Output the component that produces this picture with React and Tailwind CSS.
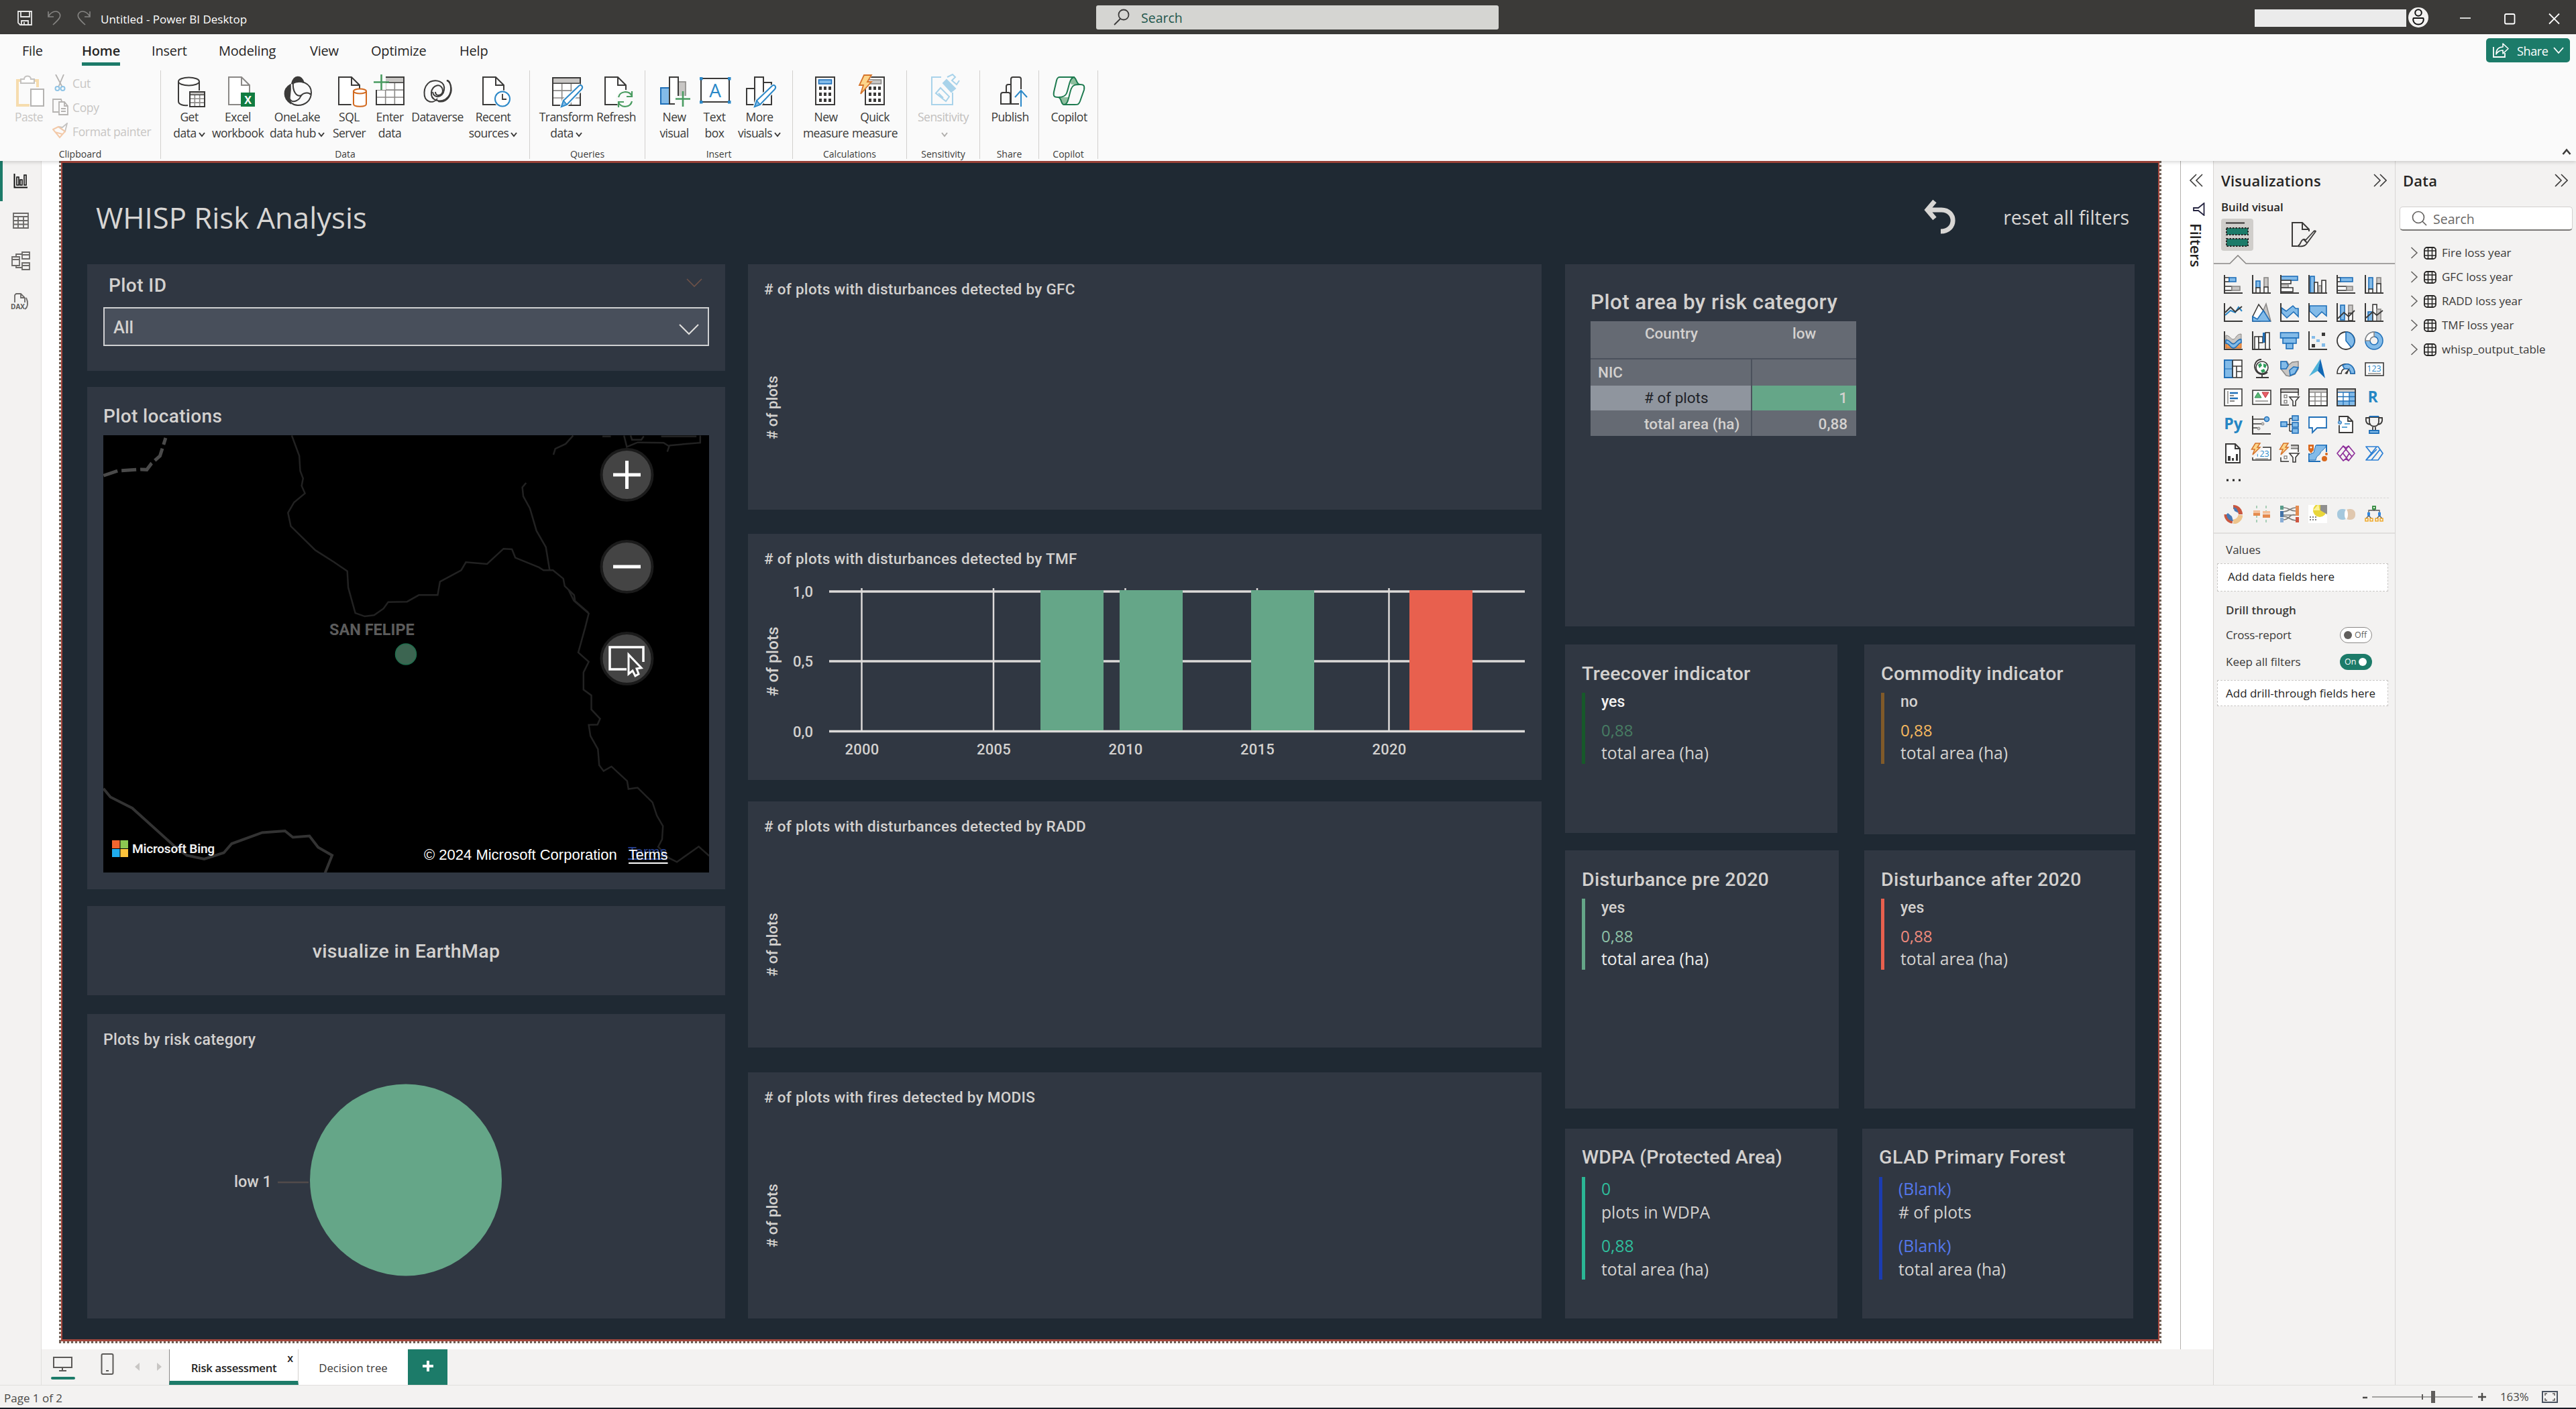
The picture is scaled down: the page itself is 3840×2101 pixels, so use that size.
import React from "react";

const UI = "font-['Open_Sans','Noto_Sans',sans-serif]";
const DIN = "font-['Roboto','Noto_Sans',sans-serif]";

const B = "#1f6fb8";
const b = "#83bbe8";
const K = "#3b3a39";
const G = "#c8c6c4";
const S = "#8a8886";
const GR = "#4a9c61";

function Svg({ w, h, children, className = "" }) {
  return (
    <svg width={w} height={h} viewBox={`0 0 ${w} ${h}`} fill="none" className={`block shrink-0 ${className}`}>
      {children}
    </svg>
  );
}

/* ---------- Title bar ---------- */

function TitleBar() {
  return (
    <header className="flex h-[51px] shrink-0 items-start bg-[#3b3a38] text-white">
      <div className="flex w-[1634px] items-start">
        <Svg w={140} h={51}>
          <path d="M27 17H47V37H30L27 34Z M31 17V25H44V17 M32 37V31H42V37 M36 37V33" stroke="#e8e8e8" strokeWidth="1.8" />
          <path d="M72 17V25H80 M72 25C76 17 84 15 88 19C92 24 89 28 79 37" stroke="#858482" strokeWidth="1.6" />
          <path d="M134 17V25H126 M134 25C130 17 122 15 118 19C114 24 117 28 127 37" stroke="#858482" strokeWidth="1.6" />
        </Svg>
        <span className="ml-[10px] pt-[17px] text-[17px] leading-[24px]">Untitled - Power BI Desktop</span>
      </div>
      <div className="mt-[8px] flex h-[36px] w-[600px] items-center rounded-[3px] bg-[#d5d5d2] pl-[25px]">
        <Svg w={26} h={26}>
          <circle cx="16" cy="9" r="7.5" stroke={K} strokeWidth="1.8" />
          <path d="M11 15L2 24" stroke={K} strokeWidth="1.8" />
        </Svg>
        <span className="mt-[2px] ml-[16px] text-[19.5px] leading-[24px] text-[#23584d]">Search</span>
      </div>
      <div className="mt-[14px] ml-[1127px] h-[26px] w-[226px] bg-[#ebebeb]" />
      <Svg w={32} h={51} className="ml-[3px]">
        <circle cx="15" cy="26" r="15" fill="#f3f2f1" />
        <circle cx="15" cy="19" r="4.8" stroke="#111" strokeWidth="2" />
        <path d="M8 27H22C23.500 27 23.500 36.500 15 36.500C6.500 36.500 6.500 27 8 27Z" stroke="#111" strokeWidth="2" />
      </Svg>
      <Svg w={170} h={51} className="ml-[43px]">
        <path d="M2 27H18" stroke="#fff" strokeWidth="1.6" />
        <rect x="69" y="21" width="14.500" height="14.500" rx="2" stroke="#fff" strokeWidth="1.8" />
        <path d="M135 20.500L150 35.500M150 20.500L135 35.500" stroke="#fff" strokeWidth="1.8" />
      </Svg>
    </header>
  );
}

/* ---------- Ribbon ---------- */

const Doc = ({ x, c = K }) => (
  <path d={`M${x} 4H${x + 19}L${x + 31} 16V45H${x}Z M${x + 19} 4V16H${x + 31}`} stroke={c} strokeWidth="2" fill="#fff" />
);
const Pencil = () => (
  <>
    <path d="M50 17L54 21L31 45L23 48L26 39Z" fill="#fafafa" stroke="#fafafa" strokeWidth="5" />
    <path d="M49 17C52 14 56 18 53 22L31 45L23 48L26 39Z" fill="#fff" stroke="#2b88c8" strokeWidth="2" />
    <path d="M26 39L31 45L23 48Z" fill={b} stroke="#2b88c8" strokeWidth="1.600" />
  </>
);
const Grid = ({ x, y, s, n = 3 }) => (
  <>
    <rect x={x} y={y} width={s} height={s} fill="#fff" />
    <rect x={x} y={y} width={s} height={s / 5} fill={G} />
    {Array.from({ length: n - 1 }, (_, i) => (
      <path key={i} d={`M${x + (s * (i + 1)) / n} ${y + s / 5}V${y + s} M${x} ${y + s / 5 + (s * 0.8 * (i + 1)) / n}H${x + s}`} stroke={S} strokeWidth="1.600" />
    ))}
    <rect x={x} y={y} width={s} height={s} stroke={K} strokeWidth="2" />
    <path d={`M${x} ${y + s / 5}H${x + s}`} stroke={K} strokeWidth="1.400" />
  </>
);
const Calc = ({ x, screen, line }) => (
  <>
    <rect x={x} y="4" width="28" height="41" fill="#fff" stroke={K} strokeWidth="2" />
    <rect x={x + 4.5} y="8" width="19" height="6" fill={screen} stroke={line} strokeWidth="1.600" />
    {[18, 27, 36].map((y) =>
      [5, 12, 19].map((d) => <rect key={`${y}-${d}`} x={x + d} y={y} width="4" height="5" fill={K} />)
    )}
  </>
);

const icons = {
  getData: (
    <>
      <path d="M14 11V40C14 45 22 47 28 46 M45 11V24" stroke={K} strokeWidth="2" />
      <ellipse cx="29.500" cy="10.500" rx="15.500" ry="6" fill="#fff" stroke={K} strokeWidth="2" />
      <Grid x={31} y={26} s={22} />
    </>
  ),
  excel: (
    <>
      <Doc x={16} c={S} />
      <rect x="34" y="27" width="21" height="21" fill="#107c41" />
      <text x="44.500" y="43.500" textAnchor="middle" fontSize="16" fontWeight="700" fill="#fff">X</text>
    </>
  ),
  onelake: (
    <>
      <path d="M22 13C25 1 36 0 40 12C34 10 27 10 22 13Z M20 15C8 22 9 36 20 43C17 34 21 31 20 15Z" fill={K} stroke={K} strokeWidth="1.500" />
      <path d="M22 14C36 6 51 14 51 27C51 39 42 46 31 46C24 46 18 41 19 37C24 44 33 38 35 33C38 27 47 26 50 30 M24 13C23 23 28 35 37 31" stroke={K} strokeWidth="2" />
    </>
  ),
  sql: (
    <>
      <Doc x={14} />
      <path d="M35 24V45C35 50 55 50 55 45V24" fill="#fff" stroke="#fafafa" strokeWidth="5" />
      <path d="M36 25V44C36 49 55 49 55 44V25" fill="#fff" stroke="#d2691e" strokeWidth="2" />
      <ellipse cx="45.500" cy="25" rx="9.500" ry="3.500" fill="#fff" stroke="#d2691e" strokeWidth="2" />
    </>
  ),
  enter: (
    <>
      <Grid x={10} y={4} s={41} />
      <path d="M5 0H24V23H5Z" fill="#fafafa" />
      <path d="M17.500 0V23M6 11.500H29" stroke={GR} strokeWidth="2.600" />
    </>
  ),
  dataverse: (
    <>
      <path d="M44 9C52 12 53 30 42 37C33 42 20 39 21 27C22 15 37 12 38 24C38 32 27 34 27 26" stroke={K} strokeWidth="2" />
      <path d="M17 40C8 36 8 18 19 11C28 7 42 10 40 23C38 36 24 36 23 26" stroke={K} strokeWidth="2" />
      <path d="M44 9C49 8 53 22 49 30C45 39 38 42 31 40 M17 40C22 42 27 40 30 36" stroke={K} strokeWidth="2" />
    </>
  ),
  recent: (
    <>
      <Doc x={15} />
      <circle cx="44" cy="36.500" r="13" fill="#fafafa" />
      <circle cx="44" cy="36.500" r="11" fill="#fff" stroke="#2b88c8" strokeWidth="2" />
      <path d="M44 29V37H50" stroke={K} strokeWidth="1.800" />
    </>
  ),
  transform: (
    <>
      <Grid x={10} y={5} s={41} />
      <Pencil />
    </>
  ),
  refresh: (
    <>
      <Doc x={13} />
      <circle cx="43" cy="37" r="14" fill="#fafafa" />
      <path d="M33 34C35 25 48 23 53 32M53 25V33H45 M53 40C51 49 38 51 33 42M33 49V41H41" stroke={GR} strokeWidth="2.200" />
    </>
  ),
  newVisual: (
    <>
      <rect x="10" y="20" width="13" height="24" fill={b} stroke={B} strokeWidth="2" />
      <rect x="36" y="11" width="11" height="33" fill={G} stroke={S} strokeWidth="1.600" />
      <rect x="23" y="4" width="13" height="40" fill="#fff" stroke={K} strokeWidth="2" />
      <path d="M31 32H55V49H44V46H31Z" fill="#fafafa" />
      <path d="M43 25V48M32 36.500H54" stroke={GR} strokeWidth="2.600" />
    </>
  ),
  textBox: (
    <>
      <rect x="10" y="6" width="42" height="35" fill="#fff" stroke={K} strokeWidth="2" />
      <text x="31" y="34" textAnchor="middle" fontSize="28" fill="#2b88c8">A</text>
      {[[8, 4], [50, 4], [8, 39], [50, 39]].map(([x, y]) => (
        <rect key={`${x}${y}`} x={x} y={y} width="4.500" height="4.500" fill="#2b88c8" />
      ))}
    </>
  ),
  moreVisuals: (
    <>
      <path d="M11 21H23V45H11Z M23 4H36V45H23Z M36 12H48V45H36Z" fill="#fff" stroke={K} strokeWidth="2" />
      <Pencil />
    </>
  ),
  newMeasure: <Calc x={15} screen={b} line={B} />,
  quick: (
    <>
      <Calc x={16} screen={G} line={S} />
      <path d="M12 -1H28L21 9H27L8 32L10 18H4Z" fill="#fafafa" />
      <path d="M14 1H25L19 11H25L9 29L13 16H7Z" fill="#fcd58a" stroke="#d6742b" strokeWidth="1.800" />
    </>
  ),
  sensitivity: (
    <g stroke="#a9d3ea" strokeWidth="2">
      <path d="M27 4H13V45H44V27" />
      <path d="M19 28L26 20L39 33L34 40Z M23 28L30 35" />
      <path d="M30 13L35 8L48 21L42 26Z" fill="#a9d3ea" />
      <path d="M36 4L44 0L48 4L43 9L50 15L54 9" />
    </g>
  ),
  publish: (
    <>
      <path d="M16 44V30C16 28 17 27 19 27H27C29 27 30 28 30 30V44Z M24 27V18C24 16 25 15 27 15H31 M31 44V7C31 5 32 4 34 4H43C45 4 46 5 46 7V22 M30 44H43 M31 44V15" stroke={K} strokeWidth="2" />
      <path d="M46 48V25M37 34L46 24L55 34" stroke="#2b88c8" strokeWidth="2" />
    </>
  ),
  copilot: (
    <>
      <path d="M38 4C41 6 41 15 46 15H34C30 15 32 4 38 4Z M14 34C19 36 17 45 23 45C28 45 28 38 30 34Z" fill="#8fbf9f" />
      <path d="M16 4H36C41 4 40 15 46 15C52 15 53 17 52 23L46 40C44 45 43 45 38 45H22C17 45 19 34 13 34C7 34 6 32 7 26L11 9C12 5 13 4 16 4Z" stroke="#1d7a4f" strokeWidth="2" />
      <path d="M38 4C30 4 30 18 26 28C24 33 20 34 14 34 M22 45C29 45 29 31 33 21C35 16 38 15 46 15" stroke="#1d7a4f" strokeWidth="2" />
    </>
  ),
};

function Caret({ light }) {
  return (
    <svg width="10" height="9" viewBox="0 0 10 9" fill="none" className="ml-[3px] inline-block">
      <path d="M1 2L5 7L9 2" stroke={light ? "#b0aeac" : K} strokeWidth="2" />
    </svg>
  );
}

function RibbonButton({ w, icon, l1, l2, caret, disabled }) {
  return (
    <div className={`flex shrink-0 flex-col items-center ${w} ${disabled ? "text-[#c2c0be]" : "text-[#3b3a39]"}`}>
      <svg width="60" height="50" viewBox="0 0 60 50" fill="none" className="shrink-0 overflow-visible">
        {icons[icon]}
      </svg>
      <span className="mt-px text-[17.5px] leading-[24px] tracking-[-0.03em] whitespace-nowrap">{l1}</span>
      <span className="text-[17.5px] leading-[25px] tracking-[-0.03em] whitespace-nowrap">
        {l2}
        {caret && <Caret light={disabled} />}
      </span>
    </div>
  );
}

function Group({ w, label, pl = "", center, children }) {
  return (
    <div className={`relative flex h-[132px] shrink-0 flex-col border-r border-[#d2d0ce] ${w}`}>
      <div className={`flex pt-[6px] ${pl} ${center ? "justify-center" : ""}`}>{children}</div>
      <span className="absolute inset-x-0 bottom-0 text-center text-[14px] leading-[15px] text-[#3b3a39]">{label}</span>
    </div>
  );
}

function Ribbon() {
  const tabs = [
    ["File", "w-[89px]"],
    ["Home", "w-[104px]"],
    ["Insert", "w-[100px]"],
    ["Modeling", "w-[136px]"],
    ["View", "w-[91px]"],
    ["Optimize", "w-[132px]"],
    ["Help", "w-[80px]"],
  ];
  return (
    <div className="relative z-10 flex h-[189px] shrink-0 flex-col bg-[#fafafa] shadow-[0_2px_5px_rgba(0,0,0,0.16)]">
      <div className="flex h-[54px] pl-[33px]">
        {tabs.map(([t, w]) => (
          <div key={t} className={`${w} flex`}>
            <div className={`flex h-[47px] flex-col justify-end ${t === "Home" ? "border-b-[5px] border-[#1c7b69] font-semibold" : "pb-[5px]"}`}>
              <span className="mb-[4px] text-[20px] leading-[26px] tracking-[-0.01em] text-[#252423]">{t}</span>
            </div>
          </div>
        ))}
        <div className="mt-[6px] mr-[9px] ml-auto flex h-[36px] w-[125px] items-center rounded-[5px] bg-[#1c7b69] text-white">
          <Svg w={26} h={26} className="ml-[9px]">
            <path d="M2 8V23H19V17" stroke="#fff" strokeWidth="1.800" />
            <path d="M6 19C6 11 10 8 16 8V3L24 10.500L16 18V13C11 13 8 15 6 19Z" stroke="#fff" strokeWidth="1.600" strokeLinejoin="round" />
          </Svg>
          <span className="mt-px ml-[11px] text-[18px] leading-[24px] tracking-[-0.02em]">Share</span>
          <Svg w={16} h={12} className="ml-[7px]">
            <path d="M1 2L8 10L15 2" stroke="#fff" strokeWidth="1.800" />
          </Svg>
        </div>
      </div>
      <div className="flex">
        <Group w="w-[240px]" label="Clipboard">
          <div className="flex w-[78px] flex-col items-end">
            <svg width="60" height="50" viewBox="0 0 60 50" fill="none" className="mr-[6px] overflow-visible">
              <path d="M21 9H14V46H32M35 9H44V19" stroke="#f6dcae" strokeWidth="4" />
              <path d="M19 13H39V7H34C34 1 24 1 24 7H19Z" fill="#fff" stroke="#c4c2c0" strokeWidth="2" />
              <rect x="34" y="22" width="19" height="25" fill="#fff" stroke="#b5b3b1" strokeWidth="2" />
            </svg>
            <span className="mt-px mr-[14px] text-[17.5px] leading-[24px] tracking-[-0.03em] text-[#c8c6c4]">Paste</span>
          </div>
          <div className="flex flex-col text-[17.5px] tracking-[-0.02em] text-[#c8c6c4]">
            <div className="flex h-[36px] items-start">
              <Svg w={30} h={26}>
                <path d="M5 0L15 19M17 0L9 19" stroke="#b5b3b1" strokeWidth="1.800" />
                <circle cx="7.500" cy="21" r="3" stroke="#8fc4e6" strokeWidth="2" />
                <circle cx="15.500" cy="21" r="3" stroke="#8fc4e6" strokeWidth="2" />
              </Svg>
              <span className="leading-[26px]">Cut</span>
            </div>
            <div className="flex h-[36px] items-start">
              <Svg w={30} h={26}>
                <path d="M9 20H1V1H13L14 4 M10 5H18L23 11V24H10Z M18 5V11H23 M13 15H20M13 19H20" stroke="#b5b3b1" strokeWidth="1.800" />
              </Svg>
              <span className="leading-[26px]">Copy</span>
            </div>
            <div className="flex items-start">
              <Svg w={30} h={26}>
                <path d="M9 6L19 13L22 1L15 7Z" stroke="#c4c2c0" strokeWidth="1.800" fill="#fff" />
                <path d="M1 10L9 6L19 13L11 22Z M4 14L15 17" stroke="#f3c9a8" strokeWidth="2" />
              </Svg>
              <span className="leading-[26px]">Format painter</span>
            </div>
          </div>
        </Group>
        <Group w="w-[550px]" label="Data" pl="pl-[6px]">
          <RibbonButton w="w-[72px]" icon="getData" l1="Get" l2="data" caret />
          <RibbonButton w="w-[73px]" icon="excel" l1="Excel" l2="workbook" />
          <RibbonButton w="w-[104px]" icon="onelake" l1="OneLake" l2="data hub" caret />
          <RibbonButton w="w-[51px]" icon="sql" l1="SQL" l2="Server" />
          <RibbonButton w="w-[70px]" icon="enter" l1="Enter" l2="data" />
          <RibbonButton w="w-[72px]" icon="dataverse" l1="Dataverse" />
          <RibbonButton w="w-[94px]" icon="recent" l1="Recent" l2="sources" caret />
        </Group>
        <Group w="w-[172px]" label="Queries" pl="pl-[8px]">
          <RibbonButton w="w-[92px]" icon="transform" l1="Transform" l2="data" caret />
          <RibbonButton w="w-[57px]" icon="refresh" l1="Refresh" />
        </Group>
        <Group w="w-[220px]" label="Insert" pl="pl-[13px]">
          <RibbonButton w="w-[60px]" icon="newVisual" l1="New" l2="visual" />
          <RibbonButton w="w-[60px]" icon="textBox" l1="Text" l2="box" />
          <RibbonButton w="w-[74px]" icon="moreVisuals" l1="More" l2="visuals" caret />
        </Group>
        <Group w="w-[170px]" label="Calculations" pl="pl-[13px]">
          <RibbonButton w="w-[72px]" icon="newMeasure" l1="New" l2="measure" />
          <RibbonButton w="w-[74px]" icon="quick" l1="Quick" l2="measure" />
        </Group>
        <Group w="w-[109px]" label="Sensitivity" center>
          <RibbonButton w="w-[80px]" icon="sensitivity" l1="Sensitivity" l2="" caret disabled />
        </Group>
        <Group w="w-[88px]" label="Share" pl="pl-[2px]" center>
          <RibbonButton w="w-[80px]" icon="publish" l1="Publish" />
        </Group>
        <Group w="w-[88px]" label="Copilot" pl="pl-[2px]" center>
          <RibbonButton w="w-[80px]" icon="copilot" l1="Copilot" />
        </Group>
        <Svg w={14} h={10} className="mt-[116px] mr-[7px] ml-auto">
          <path d="M1.500 9L7 2.500L12.500 9" stroke={K} strokeWidth="2.600" />
        </Svg>
      </div>
    </div>
  );
}

/* ---------- Left rail ---------- */

function Rail() {
  return (
    <nav className="flex w-[62px] shrink-0 border-r border-[#e1dfdd] bg-[#f3f2f1]">
      <div className="h-[60px] w-[4px] bg-[#1c7b69]" />
      <div className="flex flex-col">
        <Svg w={56} h={60}>
          <path d="M17.500 19V39.500H37" stroke="#111" strokeWidth="2" />
          <path d="M21 24H24V36H21Z M26 28H29V36H26Z M32 21H35V36H32Z" stroke="#111" strokeWidth="1.600" />
        </Svg>
        <Svg w={56} h={58}>
          <path d="M16 18H38V40H16Z M16 23H38 M16 29H38 M16 34.500H38 M23 23V40 M31 23V40" stroke="#6b6967" strokeWidth="1.800" />
        </Svg>
        <Svg w={56} h={60}>
          <path d="M14 25H25V38H14Z M14 29H25 M29 18H40V28H29Z M29 22H40 M29 34H40V44H29Z M29 38H40 M20 25V21H29 M20 38V41H29" stroke="#6b6967" strokeWidth="1.800" />
        </Svg>
        <svg width="56" height="60" viewBox="0 0 56 60" fill="none" className="block">
          <path d="M18 33V22L20 20H27L33 26V33 M27 20V26H33 M35 26C38 32 38 40 33 43" stroke="#6b6967" strokeWidth="1.800" />
          <text x="12" y="43" fontSize="10" fontWeight="700" fill="#5c5a58">DAX</text>
        </svg>
      </div>
    </nav>
  );
}

/* ---------- Report page ---------- */

function Panel({ className, children }) {
  return <section className={`relative flex shrink-0 flex-col bg-[#303742] ${className}`}>{children}</section>;
}

function MapView() {
  return (
    <div className="relative ml-[24px] h-[652px] w-[903px] overflow-hidden bg-black">
      <svg width="903" height="652" viewBox="0 0 903 652" fill="none" className="block">
        <g transform="translate(-154 -429) scale(.7015 .4464)" stroke="#222" strokeWidth="2.500">
          <path vectorEffect="non-scaling-stroke" d="M620 962L636 1030L638 1080L644 1105L641 1130L648 1155L625 1185L612 1220L618 1265L670 1345L710 1385L738 1415L740 1470L755 1555L775 1566L795 1562L815 1540L825 1518L865 1517L890 1495L930 1495L935 1450L980 1412L990 1385L1035 1391L1070 1340L1088 1342L1095 1370L1145 1402L1155 1412L1175 1412L1197 1440L1200 1465L1220 1495L1222 1515L1250 1553" />
          <path vectorEffect="non-scaling-stroke" d="M1118 1120L1110 1135L1112 1165L1126 1205L1140 1280L1160 1335L1168 1412 M1218 962L1202 990L1180 1006L1176 1026 M1326 962L1332 1000L1355 985L1410 986L1422 998L1418 1016M1422 995L1488 986V962 M1340 962L1343 976H1363L1368 964M1405 965H1480 M1280 965H1298" />
          <path vectorEffect="non-scaling-stroke" d="M220 1096L250 1080L300 1075L312 1076L322 1055L340 1030L352 970" stroke="#4a4a4a" strokeWidth="5" strokeDasharray="22 6" />
        </g>
        <g transform="translate(-74 231) scale(.6506 .3954)" stroke="#222" strokeWidth="2.500">
          <path vectorEffect="non-scaling-stroke" d="M1180 0L1192 40L1226 88L1218 140L1202 235L1226 270L1214 310V375L1232 397V450L1252 485L1246 507L1226 508L1230 550L1247 600L1250 660L1260 682L1278 665L1314 720L1317 750L1338 745L1372 800L1382 850L1396 890L1394 940L1385 968L1410 1010L1428 1025L1478 967L1502 1002" />
          <path vectorEffect="non-scaling-stroke" d="M114 748L130 780L180 822L275 963L305 1000L345 1014L390 990L408 956L478 914L530 908L548 932L586 927L606 970L638 1000L622 1066" stroke="#333" strokeWidth="4" />
        </g>
        <circle cx="451" cy="326.500" r="15.500" fill="#3c6551" stroke="#1f6e4d" strokeWidth="1.500" />
        {[59, 196, 333].map((cy) => (
          <circle key={cy} cx="780.500" cy={cy} r="38" fill="#444" stroke="#1b1b1b" strokeWidth="4" />
        ))}
        <path d="M760 59H801M780.500 38V80M760 196H801" stroke="#fff" strokeWidth="5" />
        <path d="M780 349H755V316H805V338" stroke="#fff" strokeWidth="3.500" />
        <path d="M783 327V356L789 351L793 359L798 356L795 348L802 347Z" fill="#444" stroke="#fff" strokeWidth="3" />
        <path d="M13 604H24.500V616H13Z" fill="#f1652f" />
        <path d="M25.500 604H37V616H25.500Z" fill="#8cc751" />
        <path d="M13 617H24.500V629H13Z" fill="#1fadef" />
        <path d="M25.500 617H37V629H25.500Z" fill="#fcc33c" />
      </svg>
      <span className="absolute top-[274px] left-[337px] font-['Roboto',sans-serif] text-[23.5px] leading-[32px] font-bold whitespace-nowrap text-[#5c5c5c]">SAN FELIPE</span>
      <span className="absolute top-[605px] left-[43px] text-[19px] leading-[24px] font-semibold tracking-[-0.01em] whitespace-nowrap text-[#f0f0f0]">Microsoft Bing</span>
      <span className="absolute top-[612px] left-[478px] font-['Liberation_Sans',sans-serif] text-[22px] leading-[28px] whitespace-nowrap text-white">© 2024 Microsoft Corporation</span>
      <span className="absolute top-[608px] left-[782px] font-['Liberation_Sans',sans-serif] text-[21.5px] leading-[28px] text-[#27408f] underline">Terms</span>
      <span className="absolute top-[612px] left-[783px] font-['Liberation_Sans',sans-serif] text-[21.5px] leading-[28px] text-white underline underline-offset-4">Terms</span>
    </div>
  );
}

function LeftColumn() {
  return (
    <div className={`flex w-[951px] shrink-0 flex-col text-[#d3d1cf] ${DIN}`}>
      <Panel className="h-[159px]">
        <div className="flex h-[64px] items-center justify-between pr-[34px] pl-[32px]">
          <span className="text-[28px] font-medium tracking-[0.015em]">Plot ID</span>
          <Svg w={24} h={14} className="mt-[-8px]">
            <path d="M1 1L12 12L23 1" stroke="#6d5148" strokeWidth="1.600" />
          </Svg>
        </div>
        <div className="ml-[24px] flex h-[58px] w-[903px] items-center justify-between border-2 border-[#cfd0d2] bg-[#484f5b] pr-[13px] pl-[13px]">
          <span className="mt-[2px] text-[25.5px] font-medium">All</span>
          <Svg w={30} h={18} className="mt-[10px]">
            <path d="M1 1L15 15L29 1" stroke="#e0dfdd" strokeWidth="2" />
          </Svg>
        </div>
      </Panel>
      <Panel className="mt-[24px] h-[749px]">
        <span className="h-[72px] pt-[25px] pl-[24px] text-[28px] leading-[38px] font-medium tracking-[0.013em]">Plot locations</span>
        <MapView />
      </Panel>
      <Panel className="mt-[25px] h-[133px] items-center justify-center">
        <span className="mt-[4px] text-[28.5px] font-medium tracking-[0.012em]">visualize in EarthMap</span>
      </Panel>
      <Panel className="mt-[28px] h-[454px]">
        <span className="pt-[23px] pl-[24px] text-[23px] leading-[32px] font-medium tracking-[0.01em]">Plots by risk category</span>
        <div className="mt-[49px] flex h-[288px] items-center pl-[219px]">
          <span className="mt-[5px] w-[65px] text-[23.5px] font-medium">low 1</span>
          <Svg w={335} h={288}>
            <path d="M0 147H46" stroke="#524b4b" strokeWidth="2.500" />
            <circle cx="191" cy="143.500" r="143" fill="#65a688" />
          </Svg>
        </div>
      </Panel>
    </div>
  );
}

function AxisTitle({ big }) {
  return (
    <div className="flex w-[30px] items-center justify-center">
      <span className={`-rotate-90 font-medium whitespace-nowrap ${big ? "text-[24.5px]" : "text-[22.3px]"}`}># of plots</span>
    </div>
  );
}

function ChartCard({ title, className, children }) {
  return (
    <Panel className={className}>
      <span className="h-[64px] pt-[21px] pl-[24px] text-[22.5px] leading-[32px] font-medium tracking-[0.013em]">{title}</span>
      {children || (
        <div className="flex h-[300px] pl-[21px]">
          <AxisTitle />
        </div>
      )}
    </Panel>
  );
}

function TmfChart() {
  const years = [2000, 2005, 2010, 2015, 2020];
  const bars = [
    [437, 94, "#65a688"],
    [555, 94, "#65a688"],
    [751, 94, "#65a688"],
    [987, 94, "#e8604e"],
  ];
  return (
    <div className="flex h-[252px] pl-[22px]">
      <AxisTitle big />
      <svg width="1120" height="290" viewBox="53 65 1120 290" className={`block ${DIN}`} fontSize="22" fontWeight="500" fill="#d3d1cf">
        {[87, 191, 295.5].map((y, i) => (
          <g key={y}>
            <path d={`M122 ${y}H1159`} stroke="#dcdad9" strokeWidth="3.500" />
            <text x="98" y={y + 8} textAnchor="end">{["1,0", "0,5", "0,0"][i]}</text>
          </g>
        ))}
        {years.map((year, i) => (
          <g key={year}>
            <path d={`M${170.5 + i * 196.5} 82V297`} stroke="#dcdad9" strokeWidth="2.500" />
            <text x={171 + i * 196.5} y="330" textAnchor="middle" letterSpacing="0.3">{year}</text>
          </g>
        ))}
        {bars.map(([x, w, c]) => (
          <rect key={x} x={x} y="85" width={w} height="209" fill={c} />
        ))}
      </svg>
    </div>
  );
}

function MiddleColumn() {
  return (
    <div className={`ml-[34px] flex w-[1183px] shrink-0 flex-col text-[#d3d1cf] ${DIN}`}>
      <ChartCard className="h-[366px]" title="# of plots with disturbances detected by GFC" />
      <ChartCard className="mt-[36px] h-[367px]" title="# of plots with disturbances detected by TMF">
        <TmfChart />
      </ChartCard>
      <ChartCard className="mt-[32px] h-[367px]" title="# of plots with disturbances detected by RADD" />
      <ChartCard className="mt-[37px] h-[367px]" title="# of plots with fires detected by MODIS" />
    </div>
  );
}

function RiskTable() {
  return (
    <div className="ml-[38px] grid h-[171px] w-[396px] grid-cols-[241px_155px] grid-rows-[57px_39px_37px_38px] bg-[#656a73] text-[22.5px] font-medium">
      <div className="border-b-2 border-[#4b515c] pt-[2px] text-center leading-[32px]">Country</div>
      <div className="border-b-2 border-[#4b515c] pt-[2px] text-center leading-[32px]">low</div>
      <div className="border-r-2 border-[#4b515c] pl-[11px] leading-[38px]">NIC</div>
      <div />
      <div className="border-r-2 border-[#4b515c] bg-[#8f959e] pl-[80px] leading-[37px] font-normal text-[#1e2227]"># of plots</div>
      <div className="bg-[#65a688] pr-[13px] text-right leading-[37px]">1</div>
      <div className="border-r-2 border-[#4b515c] pl-[80px] leading-[40px] tracking-[0.005em]">total area (ha)</div>
      <div className="pr-[13px] text-right leading-[40px]">0,88</div>
    </div>
  );
}

function Indicator({ className, title, bar, state, bold, color, white }) {
  return (
    <Panel className={className}>
      <span className="h-[72px] pt-[24px] pl-[25px] text-[28.5px] leading-[40px] font-medium tracking-[0.01em] whitespace-nowrap">{title}</span>
      <div className="flex">
        <div className={`ml-[25px] h-[106px] w-[5px] ${bar}`} />
        <div className="flex flex-col pl-[24px]">
          <span className={`h-[38px] text-[23px] leading-[28px] font-medium ${bold ? "text-[#f3f2f1]" : ""}`}>{state}</span>
          <span className={`h-[35px] text-[24px] leading-[35px] ${UI} ${color}`}>0,88</span>
          <span className={`text-[24.7px] leading-[34px] ${UI} ${white ? "text-[#ececeb]" : ""}`}>total area (ha)</span>
        </div>
      </div>
    </Panel>
  );
}

function DoubleIndicator({ className, title, tracking, bar, color, rows }) {
  return (
    <Panel className={className}>
      <span className={`h-[72px] pt-[23px] pl-[25px] text-[28.5px] leading-[40px] font-medium whitespace-nowrap ${tracking}`}>{title}</span>
      <div className="flex">
        <div className={`ml-[25px] h-[153px] w-[5px] ${bar}`} />
        <div className={`flex flex-col gap-[15px] pl-[24px] text-[24.7px] leading-[35px] ${UI}`}>
          {rows.map(([v, l]) => (
            <div key={l} className="flex flex-col">
              <span className={color}>{v}</span>
              <span>{l}</span>
            </div>
          ))}
        </div>
      </div>
    </Panel>
  );
}

function RightColumn() {
  return (
    <div className={`ml-[35px] flex w-[850px] shrink-0 flex-col text-[#d3d1cf] ${DIN}`}>
      <Panel className="h-[540px] w-[849px]">
        <span className="h-[85px] pt-[36px] pl-[38px] text-[31.5px] leading-[42px] font-medium tracking-[0.013em]">Plot area by risk category</span>
        <RiskTable />
      </Panel>
      <div className="mt-[27px] flex items-start gap-[40px]">
        <Indicator className="h-[281px] w-[406px]" title="Treecover indicator" bar="bg-[#17592a]" state="yes" bold color="text-[#477c62]" />
        <Indicator className="h-[283px] w-[404px]" title="Commodity indicator" bar="bg-[#805a29]" state="no" color="text-[#f5b95f]" />
      </div>
      <div className="mt-[24px] flex items-start gap-[38px]">
        <Indicator className="h-[385px] w-[408px]" title="Disturbance pre 2020" bar="bg-[#65a688]" state="yes" color="text-[#8dc0a6]" white />
        <Indicator className="h-[385px] w-[404px]" title="Disturbance after 2020" bar="bg-[#e8604e]" state="yes" color="text-[#ee8a7d]" />
      </div>
      <div className="mt-[30px] flex items-start gap-[37px]">
        <DoubleIndicator className="h-[283px] w-[406px]" title="WDPA (Protected Area)" tracking="tracking-[0.004em]" bar="bg-[#2bb795]" color="text-[#2fbd9b]" rows={[["0", "plots in WDPA"], ["0,88", "total area (ha)"]]} />
        <DoubleIndicator className="h-[283px] w-[404px]" title="GLAD Primary Forest" tracking="tracking-[0.02em]" bar="bg-[#1b3cb0]" color="text-[#5477ea]" rows={[["(Blank)", "# of plots"], ["(Blank)", "total area (ha)"]]} />
      </div>
    </div>
  );
}

function ReportPage() {
  return (
    <div className="flex h-[1763px] w-[3134px] shrink-0 flex-col">
      <div className="flex h-[1760px]">
        <div className="w-[3px] bg-[repeating-linear-gradient(180deg,#6f5f55_0_3px,#f4f0ee_3px_6px)]" />
        <div className="flex w-[3128px] flex-col border-x-2 border-t-[3px] border-b-[3px] border-[#a5473d] bg-[#1f2933]">
          <div className="flex h-[151px] items-center pl-[50px] text-[#d8d6d4]">
            <span className="mt-[12px] text-[43.7px]">WHISP Risk Analysis</span>
            <Svg w={48} h={54} className="mt-[11px] ml-auto">
              <path d="M16 3L5 16L16 29 M6 16H26C49 16 49 48 25 48" stroke="#d8d6d4" strokeWidth="7" />
            </Svg>
            <span className="mt-[12px] mr-[43px] ml-[70px] text-[28.5px] whitespace-nowrap">reset all filters</span>
          </div>
          <div className="flex pl-[37px]">
            <LeftColumn />
            <MiddleColumn />
            <RightColumn />
          </div>
        </div>
        <div className="w-[3px] bg-[repeating-linear-gradient(180deg,#6f5f55_0_3px,#f4f0ee_3px_6px)]" />
      </div>
      <div className="h-[3px] bg-[repeating-linear-gradient(90deg,#6f5f55_0_3px,#f4f0ee_3px_6px)]" />
    </div>
  );
}

function FiltersPane() {
  return (
    <div className="ml-auto flex w-[49px] flex-col items-center border-l border-[#b3b0ad] bg-white">
      <Svg w={22} h={20} className="mt-[19px] mr-[2px]">
        <path d="M11 1L2 10L11 19M20 1L11 10L20 19" stroke={K} strokeWidth="1.600" />
      </Svg>
      <Svg w={20} h={20} className="mt-[23px] ml-[6px]">
        <path d="M17.500 1V19L9 12H2V8H9Z" stroke="#252440" strokeWidth="1.800" />
      </Svg>
      <span className="mt-[11px] mr-[3px] text-[22px] leading-[26px] font-semibold text-[#252423] [writing-mode:vertical-rl]">Filters</span>
    </div>
  );
}

function PageTabs() {
  return (
    <div className="flex h-[53px] items-stretch bg-[#f3f2f1] pl-[14px] text-[16.8px]">
      <Svg w={176} h={53}>
        <path d="M4 12H31V27H4Z M17 27V32 M12 32H23" stroke="#5c5a58" strokeWidth="2" />
        <rect x="0" y="41" width="36" height="4" rx="2" fill="#1c7b69" />
        <rect x="75.500" y="7" width="17" height="30" rx="2" stroke="#5c5a58" strokeWidth="2" />
        <path d="M82 32H86" stroke="#5c5a58" strokeWidth="2" />
        <path d="M132 20V32L125 26Z M158 20V32L165 26Z" fill="#c8c6c4" />
      </Svg>
      <div className="relative flex w-[193px] items-center justify-center border-r border-b-[6px] border-l border-r-[#d2d0ce] border-b-[#1c7b69] border-l-[#8a8886] bg-white pt-[8px] font-semibold text-[#252423]">
        <span className="tracking-[-0.02em] whitespace-nowrap">Risk assessment</span>
        <span className="absolute top-[2px] right-[7px] text-[16px] leading-[22px]">x</span>
      </div>
      <div className="flex w-[163px] items-center justify-center bg-white pt-[3px] text-[#3b3a39]">Decision tree</div>
      <div className="flex w-[59px] items-center justify-center bg-[#1c7b69]">
        <Svg w={18} h={18} className="mt-[-3px]">
          <path d="M9 1V17M1 9H17" stroke="#fff" strokeWidth="4" />
        </Svg>
      </div>
    </div>
  );
}

/* ---------- Visualizations pane ---------- */

const Axis = () => <path d="M1 0V27H28" stroke={K} strokeWidth="2" />;
const R = ({ x, y, w, h, f = "#fff", s = K }) => <rect x={x} y={y} width={w} height={h} fill={f} stroke={s} strokeWidth="1.600" />;
const Funnel = () => (
  <>
    <path d="M13 12H30V29H13Z" fill="#f3f2f1" />
    <path d="M14 14H28L23 20V27H19V20Z" fill="#fff" stroke={K} strokeWidth="1.600" />
  </>
);
const Bolt = () => (
  <>
    <path d="M3 -3H16V8L3 20H-3V8Z" fill="#f3f2f1" />
    <path d="M5 -1H12L8 5H12L1 16L4 8H-0.500Z" fill="#fcd58a" stroke="#d6742b" strokeWidth="1.500" />
  </>
);

const vizIcons = [
  <><R x={1} y={4} w={7} h={6} /><R x={8} y={4} w={10} h={6} f={b} s={B} /><R x={1} y={17} w={11} h={6} /><R x={12} y={17} w={12} h={6} f={G} s={S} /><Axis /></>,
  <><R x={6} y={9} w={6} h={10} f={b} s={B} /><R x={6} y={19} w={6} h={8} /><R x={18} y={4} w={6} h={14} f={G} s={S} /><R x={18} y={18} w={6} h={9} /><Axis /></>,
  <><R x={1} y={2} w={25} h={6} f={b} s={B} /><R x={1} y={8} w={15} h={5} /><R x={1} y={14} w={11} h={5} f={G} s={S} /><R x={1} y={19} w={18} h={6} /><Axis /></>,
  <><R x={3} y={2} w={6} h={25} f={b} s={B} /><R x={9} y={11} w={5} h={16} /><R x={15} y={16} w={5} h={11} f={G} s={S} /><R x={20} y={8} w={6} h={19} /><Axis /></>,
  <><R x={1} y={4} w={5} h={6} /><R x={6} y={4} w={18} h={6} f={b} s={B} /><R x={1} y={17} w={14} h={6} /><R x={15} y={17} w={9} h={6} f={G} s={S} /><Axis /></>,
  <><R x={6} y={4} w={6} h={17} f={b} s={B} /><R x={6} y={21} w={6} h={6} /><R x={18} y={4} w={6} h={9} f={G} s={S} /><R x={18} y={13} w={6} h={14} /><Axis /></>,
  <><path d="M2 18L10 11L17 14L22 6L27 12" stroke="#2b88c8" strokeWidth="2" /><path d="M2 14L10 6L17 13L27 5" stroke={K} strokeWidth="2" /><Axis /></>,
  <><path d="M10 27L21 1L28 27Z" fill={G} stroke={S} strokeWidth="1.500" /><path d="M1 20L10 2L19 14L12 27H1Z" fill="#fff" stroke={K} strokeWidth="1.600" /><path d="M1 20L8 24L17 11L27 27H1Z" fill={b} stroke={B} strokeWidth="1.600" /></>,
  <><path d="M2 7L9 12L19 4L23 8H27V20L20 13L10 22L2 14Z" fill={b} stroke={B} strokeWidth="1.600" /><Axis /></>,
  <><path d="M2 4H27V19L20 13L12 21L2 12Z" fill={b} stroke={B} strokeWidth="1.600" /><Axis /></>,
  <><R x={6} y={3} w={6} h={22} f={b} s={B} /><R x={18} y={3} w={6} h={12} f={G} s={S} /><R x={18} y={15} w={6} h={11} /><path d="M2 23L11 14L18 20L27 11" stroke={K} strokeWidth="1.800" /><Axis /></>,
  <><R x={5} y={13} w={7} h={14} f={b} s={B} /><R x={12} y={2} w={6} h={25} /><R x={18} y={9} w={6} h={18} f={G} s={S} /><path d="M2 22L12 13L18 18L27 11" stroke={K} strokeWidth="1.800" /><Axis /></>,
  <><path d="M3 14H26V25H3Z" fill="#f0984e" stroke="#d2691e" /><path d="M3 6C9 6 10 12 14 12C18 12 18 4 26 4V11C20 11 19 18 14 18C9 18 9 13 3 12Z" fill={G} stroke={S} /><path d="M3 13C9 12 10 19 14 19C18 19 19 12 26 12V17C21 17 20 25 14 25C9 25 9 18 3 18Z" fill={b} stroke={B} strokeWidth="1.500" /><Axis /></>,
  <><R x={4} y={8} w={6} h={19} /><R x={10} y={8} w={6} h={9} /><path d="M16 2H20V17H16Z" fill={B} /><R x={20} y={2} w={6} h={25} /><Axis /></>,
  <><R x={0.5} y={2} w={27} h={8} f={b} s={B} /><R x={4} y={10} w={20} h={8} f={b} s={B} /><R x={9} y={18} w={10} h={8} f={b} s={B} /></>,
  <><path d="M20 2H25V7H20Z M5 19H10V24H5Z" fill={K} /><path d="M5 7H10V11H5Z M12 12H17V16H12Z M20 18H25V23H20Z" fill={b} /><Axis /></>,
  <><circle cx="14" cy="14" r="13" fill="#fff" stroke={K} strokeWidth="1.800" /><path d="M14 1A13 13 0 0 1 22 24L14 14Z" fill={b} stroke={B} strokeWidth="1.600" /></>,
  <><circle cx="14" cy="14" r="9.500" stroke={B} strokeWidth="8.500" /><circle cx="14" cy="14" r="9.500" stroke={b} strokeWidth="5.500" /><path d="M1 14A13 13 0 0 1 14 1V8A6 6 0 0 0 8 14Z" fill="#fff" stroke={S} strokeWidth="1.600" /></>,
  <><R x={1} y={1} w={26} h={26} /><path d="M1 1H13V27H1Z" fill={b} stroke={B} strokeWidth="1.800" /><path d="M1 14H13" stroke={B} /><path d="M13 10H27M19 10V27M19 18H27M13 1V27" stroke={K} strokeWidth="1.600" /></>,
  <><circle cx="15" cy="12" r="9" fill="#fff" stroke={K} strokeWidth="1.600" /><path d="M9 8L13 5L15 9L11 13Z M17 6L22 8L20 13L17 11Z M13 16L18 14L20 18L15 20Z" fill="#2e9e5b" /><path d="M14 0C6 0 1 9 6 17C10 23 18 24 23 19 M15 23V27M6 27H25" stroke={K} strokeWidth="1.800" /></>,
  <><path d="M1 3H10L13 8L18 4L27 3V14L22 22L14 25L9 24L1 14Z" fill={G} stroke={S} strokeWidth="1.500" /><path d="M1 3H9L12 9L9 14H1Z M14 16L20 11L27 12L22 21L15 24Z" fill={b} stroke={B} strokeWidth="1.600" /></>,
  <><path d="M18 -1L1 25L14 17Z" fill="#4fb3d9" /><path d="M18 -1L14 17L25 28Z" fill="#1068b5" /></>,
  <><path d="M1 21C1 2 27 2 27 21H21C21 11 7 11 7 21Z" fill="#fff" stroke={K} strokeWidth="1.600" /><path d="M9 9C18 3 27 10 27 21H21C21 15 17 13 12 14Z" fill={b} stroke={B} strokeWidth="1.600" /><path d="M12 21L20 12L16 22Z" fill={K} /></>,
  <><R x={1} y={5} w={27} h={19} /><text x="14" y="18" fontSize="12.500" textAnchor="middle" fill="#2b88c8">123</text><path d="M5 21H24" stroke={S} strokeWidth="1.500" /></>,
  <><R x={1} y={2} w={26} h={25} /><path d="M6 5V24" stroke={S} strokeWidth="1.500" /><path d="M9 8H21M9 16H21" stroke={B} strokeWidth="2.500" /><path d="M9 12H15M9 20H16" stroke={S} strokeWidth="2" /></>,
  <><R x={1} y={4} w={27} h={21} /><path d="M4 15L9 7L14 15Z" fill="#5bb974" stroke="#2e8b57" /><path d="M15 7H25L20 15Z" fill="#e8606a" stroke="#c0323c" /><path d="M5 20H24" stroke={S} strokeWidth="1.500" /></>,
  <><R x={1} y={2} w={26} h={24} /><path d="M1 2H27V7H1Z" fill={G} stroke={K} strokeWidth="1.500" /><path d="M6 11H10V15H6Z M6 19H10V23H6Z" stroke={S} strokeWidth="1.500" /><Funnel /></>,
  <><R x={1} y={2} w={27} h={25} /><path d="M1 2H28V6H1Z" fill={G} /><path d="M1 7H28M1 13.500H28M1 20H28M10 7V27M19 7V27" stroke={S} strokeWidth="1.500" /><rect x="1" y="2" width="27" height="25" stroke={K} strokeWidth="1.800" /></>,
  <><R x={1} y={2} w={27} h={25} /><path d="M1 2H28V6H1Z" fill={G} /><path d="M19 7H28V27H1V20H19Z" fill={b} /><path d="M1 7H28M1 13.500H28M1 20H28M10 7V27M19 7V27" stroke={B} strokeWidth="1.300" /><rect x="1" y="2" width="27" height="25" stroke={K} strokeWidth="1.800" /></>,
  <text x="12" y="22" fontSize="23" fontWeight="700" textAnchor="middle" fill="#2586c4">R</text>,
  <text x="14" y="20" fontSize="23" fontWeight="700" textAnchor="middle" fill="#2586c4">Py</text>,
  <><path d="M2 5H20M2 12H16M2 18H8" stroke={K} strokeWidth="1.600" /><circle cx="22" cy="5" r="3.500" fill={b} stroke={B} strokeWidth="1.500" /><circle cx="16" cy="12" r="2" fill={G} stroke={S} /><circle cx="10" cy="19" r="2" fill={G} stroke={S} /><Axis /></>,
  <><path d="M10 13H18M14 4V23M14 4H18M14 23H18" stroke={K} strokeWidth="1.500" /><R x={1} y={9} w={9} h={7} f={b} s={B} /><R x={18} y={0} w={9} h={7} f={b} s={B} /><R x={18} y={10} w={9} h={7} f={b} s={B} /><R x={18} y={19} w={9} h={7} f={b} s={B} /></>,
  <path d="M1 2H27V18H13L6 25V18H1Z" fill="#fff" stroke={B} strokeWidth="1.800" />,
  <><path d="M4 8V1H17L24 8V25H4V14 M17 1V8H24" stroke={K} strokeWidth="1.800" fill="#fff" /><circle cx="5" cy="10" r="2.500" fill={b} stroke={B} /><path d="M12 12H20M8 17H16" stroke="#2b88c8" strokeWidth="1.500" /></>,
  <><path d="M7 3H2C1 10 4 13 9 13M21 3H26C27 10 24 13 19 13 M7 2H21V9C21 18 7 18 7 9Z M12 16V22M16 16V22" stroke={K} strokeWidth="1.800" /><path d="M7 1H21M7 22H21V26H7Z" fill={b} stroke={B} strokeWidth="1.800" /></>,
  <><path d="M3 0H17L24 7V28H3Z M17 0V7H24" stroke={K} strokeWidth="2" fill="#fff" /><path d="M6 18H10V25H6Z M12 21H15V25H12Z M18 15H21V25H18Z" fill={K} /></>,
  <><R x={1} y={5} w={27} h={19} /><text x="15" y="19" fontSize="12.500" textAnchor="middle" fill="#2b88c8">123</text><path d="M5 22H24" stroke={S} strokeWidth="1.300" /><Bolt /></>,
  <><R x={1} y={2} w={26} h={24} /><path d="M10 2H27V7H10Z" fill={G} stroke={K} /><path d="M6 18H10V22H6Z" stroke={S} strokeWidth="1.500" /><Funnel /><Bolt /></>,
  <><path d="M12 2H27V12M1 14V26H18" stroke={B} strokeWidth="2" /><path d="M11 2H27C24 9 20 9 18 13C17 18 12 16 11 24H1V16L8 13Z" fill={b} stroke={B} /><path d="M0 1H8V9L4 14L0 9Z" fill="#d9691e" /><circle cx="4" cy="5" r="1.500" fill="#fff" /><circle cx="24" cy="22" r="4" fill="#d9691e" /><circle cx="27" cy="15" r="2" fill="#d9691e" /></>,
  <path d="M1 14L10 3L14 6L18 3L27 14L18 25L14 22L10 25Z M10 3L23 19 M18 3L14 8L5 19 M9 13L18 25 M14 22L19 14" stroke="#8e2f9a" strokeWidth="1.700" strokeLinejoin="round" />,
  <path d="M2 4H20L27 14L20 24H2L10 14Z M10 14L18 4M2 24L18 8M10 24L23 8" stroke="#2b7fd4" strokeWidth="1.700" strokeLinejoin="round" />,
];

const customIcons = [
  <><path d="M14 3A11 11 0 0 1 25 14" stroke="#c9573f" strokeWidth="6" /><path d="M25 15A11 11 0 0 1 14 25" stroke="#eec48c" strokeWidth="7" /><path d="M13 25A11 11 0 0 1 3 14" stroke="#c9573f" strokeWidth="5" /><path d="M6 12L12 17L14 24C8 24 4 19 4 14Z M14 3L19 5L22 12L16 9Z" fill="#4a7ab5" /></>,
  <><path d="M7 1V26M21 1V26" stroke="#a9cfb8" strokeWidth="2" strokeDasharray="4 3" /><path d="M2 8H12V12H2Z M16 9H27V13H16Z" fill="#f4c09a" /><path d="M2 12H12V16H2Z M16 14H27V19H16Z" fill="#e58a4e" /></>,
  <><path d="M5 4C14 4 14 9 23 9M5 10C14 10 14 4 23 4M5 15H23M5 22C14 22 14 12 23 15M5 17C14 17 14 23 23 23" stroke="#7d7b79" strokeWidth="1.600" /><path d="M0 1H5V7H0Z" fill="#5a9c8b" /><path d="M0 9H5V18H0Z" fill="#4472a8" /><path d="M0 19H5V26H0Z" fill="#8aaed6" /><path d="M23 1H28V16H23Z" fill="#e58a4e" /><path d="M23 18H28V26H23Z" fill="#cf5540" /></>,
  <><rect width="28" height="27" fill="#fff" /><circle cx="17" cy="8" r="10" fill="#e9d63a" /><path d="M18 8V-1H28V14Z" fill="#8f8f8f" /><path d="M7 8L15 -1L17 8Z" fill="#fbf29a" /><path d="M2 18H14M2 22H14" stroke="#555" strokeWidth="1.500" strokeDasharray="2 2" /></>,
  <><rect x="1" y="6" width="16" height="16" rx="7" fill="#a5c8dd" /><rect x="12" y="6" width="16" height="16" rx="7" fill="#e0c7ae" /><ellipse cx="14.500" cy="14" rx="2.500" ry="7" fill="#fff" /></>,
  <><path d="M14 5V9M6 12V8H22V12M6 16L2 20M6 16L10 20M22 16L18 20M22 16L26 20" stroke="#555" strokeWidth="1.300" /><rect x="12" y="2" width="4" height="4" stroke="#2e8b3a" strokeWidth="1.800" /><path d="M4 11H8V16H4Z M20 11H24V16H20Z" fill="#2f86e0" /><path d="M1 20H5V24H1Z M8 20H12V24H8Z M16 20H20V24H16Z M23 20H27V24H23Z" stroke="#f0ab2e" strokeWidth="1.600" /></>,
];

function PaneHeader({ title }) {
  return (
    <div className="flex h-[59px] items-center justify-between pr-[12px] pl-[11px] text-[#252423]">
      <span className="text-[22px] font-semibold tracking-[0.01em]">{title}</span>
      <Svg w={20} h={20} className="mt-[-1px]">
        <path d="M1 1L10 10L1 19M10 1L19 10L10 19" stroke={K} strokeWidth="1.600" />
      </Svg>
    </div>
  );
}

function VizPane() {
  return (
    <aside className="flex w-[271px] shrink-0 flex-col border-l border-[#d8d6d4] bg-[#f3f2f1] text-[17px] text-[#3b3a39]">
      <PaneHeader title="Visualizations" />
      <span className="pl-[11px] text-[16.8px] leading-[20px] font-semibold text-[#252423]">Build visual</span>
      <div className="mt-[7px] flex pl-[11px]">
        <div className="flex size-[48px] items-center justify-center rounded-[4px] bg-[#d0cecb]">
          <Svg w={38} h={40}>
            <path d="M2 2.500H30" stroke="#252423" strokeWidth="1.800" />
            <rect x="3" y="10" width="32" height="10" fill="#1c7b69" stroke="#252423" strokeWidth="2" strokeDasharray="2.500 2" />
            <rect x="3" y="26" width="32" height="11" fill="#1c7b69" stroke="#252423" strokeWidth="2" strokeDasharray="2.500 2" />
          </Svg>
        </div>
        <Svg w={40} h={40} className="mt-[4px] ml-[56px]">
          <path d="M9 37H2V2H17L27 12V15 M17 2V12H27" stroke={K} strokeWidth="2" />
          <path d="M37 15L23 34C21 37 15 38 10 37C15 35 14 30 17 28C19 26 21 27 22 28L34 15C35 14 37 14 37 15Z M19 27L24 32" stroke={K} strokeWidth="1.800" fill="#f3f2f1" />
        </Svg>
      </div>
      <Svg w={270} h={22}>
        <path d="M0 19H24L36 7L48 19H270" stroke="#8a8886" strokeWidth="1.600" />
      </Svg>
      <div className="mt-[14px] grid grid-cols-6 gap-x-[14px] gap-y-[14px] self-start pl-[15px]">
        {vizIcons.map((icon, i) => (
          <svg key={i} width="28" height="28" viewBox="0 0 28 28" fill="none" className="overflow-visible">
            {icon}
          </svg>
        ))}
      </div>
      <Svg w={60} h={52}>
        <path d="M19 26H22M28 26H31M37 26H40" stroke="#252423" strokeWidth="3" />
      </Svg>
      <div className="mx-[9px] border-t border-dashed border-[#d8d6d4]" />
      <div className="mt-[10px] flex h-[41px] gap-[14px] pl-[15px]">
        {customIcons.map((icon, i) => (
          <svg key={i} width="28" height="28" viewBox="0 0 28 28" fill="none">
            {icon}
          </svg>
        ))}
      </div>
      <div className="flex flex-col border-t-2 border-[#e1dfdd] pl-[5px]">
        <span className="pt-[12px] pl-[13px] leading-[24px]">Values</span>
        <div className="mt-[8px] flex h-[42px] w-[255px] items-center border border-dashed border-[#c8c6c4] bg-white pb-[2px] pl-[15px] text-[17px] text-[#252423]">Add data fields here</div>
        <span className="mt-[16px] pl-[13px] leading-[24px] font-semibold">Drill through</span>
        <div className="mt-[13px] flex h-[24px] items-center justify-between pr-[34px] pl-[13px]">
          <span className="tracking-[-0.01em]">Cross-report</span>
          <div className="flex h-[24px] w-[48px] items-center gap-[4px] rounded-full border-[1.5px] border-[#8a8886] bg-white pl-[5px]">
            <div className="size-[12px] rounded-full bg-[#605e5c]" />
            <span className="text-[12.5px] text-[#605e5c]">Off</span>
          </div>
        </div>
        <div className="mt-[16px] flex h-[24px] items-center justify-between pr-[34px] pl-[13px]">
          <span>Keep all filters</span>
          <div className="flex h-[24px] w-[48px] items-center gap-[4px] rounded-full bg-[#1c7b69] pl-[7px]">
            <span className="text-[12.5px] text-white">On</span>
            <div className="size-[12px] rounded-full bg-white" />
          </div>
        </div>
        <div className="mt-[15px] flex h-[39px] w-[255px] items-center border border-dashed border-[#c8c6c4] bg-white pl-[12px] text-[17px] whitespace-nowrap text-[#252423]">Add drill-through fields here</div>
      </div>
    </aside>
  );
}

function DataPane() {
  const tables = ["Fire loss year", "GFC loss year", "RADD loss year", "TMF loss year", "whisp_output_table"];
  return (
    <aside className="flex w-[270px] shrink-0 flex-col border-l border-[#d8d6d4] bg-[#f3f2f1]">
      <PaneHeader title="Data" />
      <div className="mt-[9px] ml-[6px] flex h-[36px] w-[258px] items-center rounded-[5px] border border-b-2 border-[#d2d0ce] border-b-[#7a7876] bg-white pl-[17px]">
        <Svg w={24} h={24}>
          <circle cx="10" cy="10" r="8.500" stroke="#605e5c" strokeWidth="1.600" />
          <path d="M16 16L22 22" stroke="#605e5c" strokeWidth="1.600" />
        </Svg>
        <span className="mt-[2px] ml-[8px] text-[19.5px] text-[#6b6967]">Search</span>
      </div>
      <div className="mt-[15px] flex flex-col">
        {tables.map((t) => (
          <div key={t} className="flex h-[36px] items-center pl-[22px]">
            <Svg w={12} h={18}>
              <path d="M1.500 1L10 9L1.500 17" stroke="#605e5c" strokeWidth="1.500" />
            </Svg>
            <Svg w={19} h={19} className="ml-[8px]">
              <rect x="1" y="1" width="17" height="17" rx="4" stroke="#252423" strokeWidth="1.800" />
              <path d="M1 6H18M1 13H18M6.500 1V18M12.500 1V18" stroke="#252423" strokeWidth="1.500" />
            </Svg>
            <span className="ml-[8px] text-[17px] text-[#3b3a39]">{t}</span>
          </div>
        ))}
      </div>
    </aside>
  );
}

/* ---------- Status bar ---------- */

function StatusBar() {
  return (
    <footer className="flex h-[36px] shrink-0 items-center border-t border-b-2 border-t-[#e1dfdd] border-b-[#191a24] bg-[#f3f2f1] text-[17px] text-[#4b4a48]">
      <span className="pt-[4px] pl-[6px]">Page 1 of 2</span>
      <Svg w={186} h={20} className="ml-auto">
        <path d="M1 11H8M173 10H185M179 4V16" stroke="#4b4a48" strokeWidth="2.400" />
        <path d="M15 10H165" stroke="#8a8886" strokeWidth="1.600" />
        <path d="M90 6V14" stroke="#605e5c" strokeWidth="2" />
        <rect x="103" y="1" width="6" height="18" fill="#605e5c" />
      </Svg>
      <span className="ml-[20px] w-[62px] text-[16.8px]">163%</span>
      <Svg w={24} h={20} className="mr-[27px]">
        <rect x="1" y="2" width="22" height="16" stroke="#4a5360" strokeWidth="2" />
        <path d="M5 8V5H8M16 5H19V8M19 12V15H16M8 15H5V12" stroke="#605e5c" strokeWidth="1.600" />
      </Svg>
    </footer>
  );
}

export default function App() {
  return (
    <div className={`flex h-[2101px] w-[3840px] flex-col overflow-hidden bg-white ${UI}`}>
      <TitleBar />
      <Ribbon />
      <div className="flex h-[1825px] shrink-0">
        <Rail />
        <main className="flex w-[3237px] shrink-0 flex-col">
          <div className="flex h-[1772px] bg-white pl-[26px]">
            <ReportPage />
            <FiltersPane />
          </div>
          <PageTabs />
        </main>
        <VizPane />
        <DataPane />
      </div>
      <StatusBar />
    </div>
  );
}
